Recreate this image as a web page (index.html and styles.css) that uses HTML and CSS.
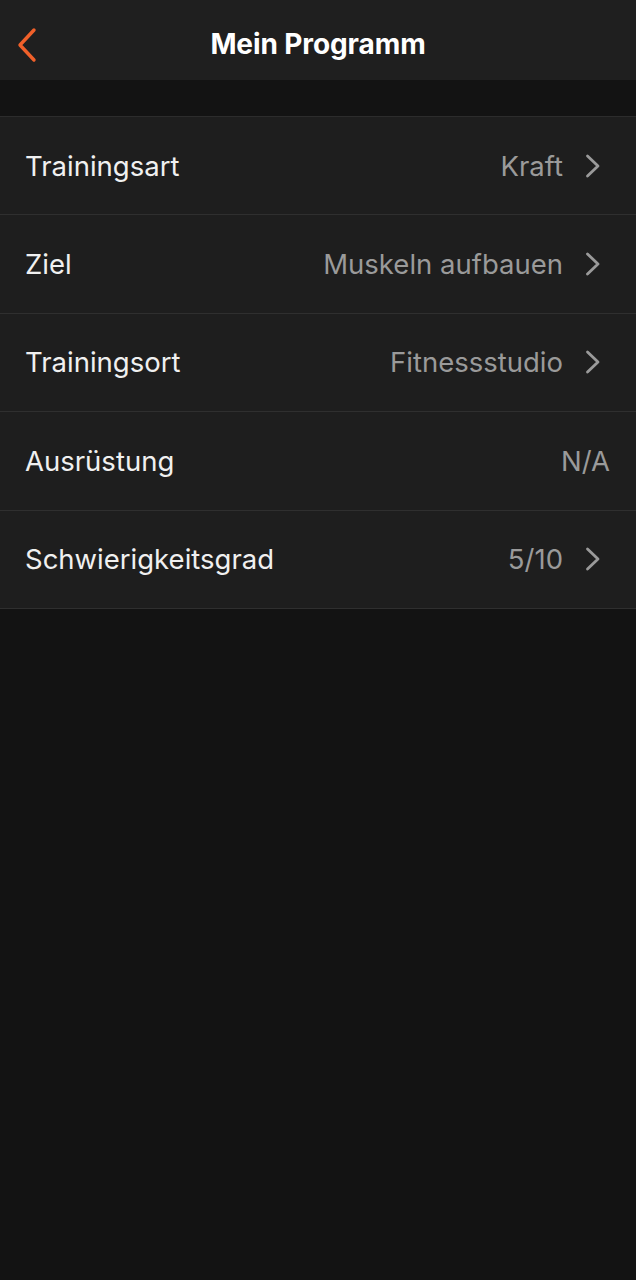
FILE: index.html
```html
<!DOCTYPE html>
<html lang="de">
<head>
  <meta charset="UTF-8">
  <meta name="viewport" content="width=device-width, initial-scale=1.0">
  <title>Mein Programm</title>
  <link rel="stylesheet" href="styles.css">
</head>
<body>
  <header class="topbar">
    <a class="back" href="#">
      <svg width="24" height="36" viewBox="0 0 24 36">
        <path d="M17 3 L3 18 L17 33" fill="none" stroke="#f0602a" stroke-width="3.4" stroke-linecap="round" stroke-linejoin="round"/>
      </svg>
    </a>
    <h1>Mein Programm</h1>
  </header>

  <ul class="list">
    <li class="row">
      <span class="label">Trainingsart</span>
      <span class="value">Kraft</span>
      <svg class="chev" width="18" height="26" viewBox="0 0 18 26"><path d="M3.5 3 L14 13 L3.5 23"/></svg>
    </li>
    <li class="row">
      <span class="label">Ziel</span>
      <span class="value">Muskeln aufbauen</span>
      <svg class="chev" width="18" height="26" viewBox="0 0 18 26"><path d="M3.5 3 L14 13 L3.5 23"/></svg>
    </li>
    <li class="row">
      <span class="label">Trainingsort</span>
      <span class="value">Fitnessstudio</span>
      <svg class="chev" width="18" height="26" viewBox="0 0 18 26"><path d="M3.5 3 L14 13 L3.5 23"/></svg>
    </li>
    <li class="row">
      <span class="label">Ausrüstung</span>
      <span class="value">N/A</span>
    </li>
    <li class="row">
      <span class="label">Schwierigkeitsgrad</span>
      <span class="value">5/10</span>
      <svg class="chev" width="18" height="26" viewBox="0 0 18 26"><path d="M3.5 3 L14 13 L3.5 23"/></svg>
    </li>
  </ul>
</body>
</html>
```

FILE: styles.css
```css
body {
  margin: 0;
  background-color: #131313;
  color: #f2f2f2;
  font-family: Inter, "Noto Sans", sans-serif;
}

.topbar {
  position: relative;
  box-sizing: border-box;
  height: 80px;
  padding-top: 8px;
  background-color: #1f1f1f;
  display: flex;
  align-items: center;
  justify-content: center;
}

.back {
  position: absolute;
  left: 17px;
  top: 27px;
  display: block;
  height: 36px;
}

.topbar h1 {
  margin: 0;
  font-size: 28px;
  font-weight: 700;
  color: #ffffff;
  letter-spacing: -0.1px;
}

.list {
  list-style: none;
  margin: 36px 0 0 0;
  padding: 0;
  border-top: 1px solid #2c2c2c;
}

.row {
  display: flex;
  align-items: center;
  height: 97.4px;
  padding: 0 26px 0 25px;
  background-color: #1e1e1e;
  border-bottom: 1px solid #2f2f2f;
  font-size: 27.5px;
}

.label {
  flex: 1;
  color: #f0f0f0;
}

.value {
  color: #9a9a9a;
}

.chev {
  margin-left: 21px;
  margin-right: 8px;
}

.chev path {
  fill: none;
  stroke: #9a9a9a;
  stroke-width: 2.8;
  stroke-linecap: round;
  stroke-linejoin: round;
}
```
